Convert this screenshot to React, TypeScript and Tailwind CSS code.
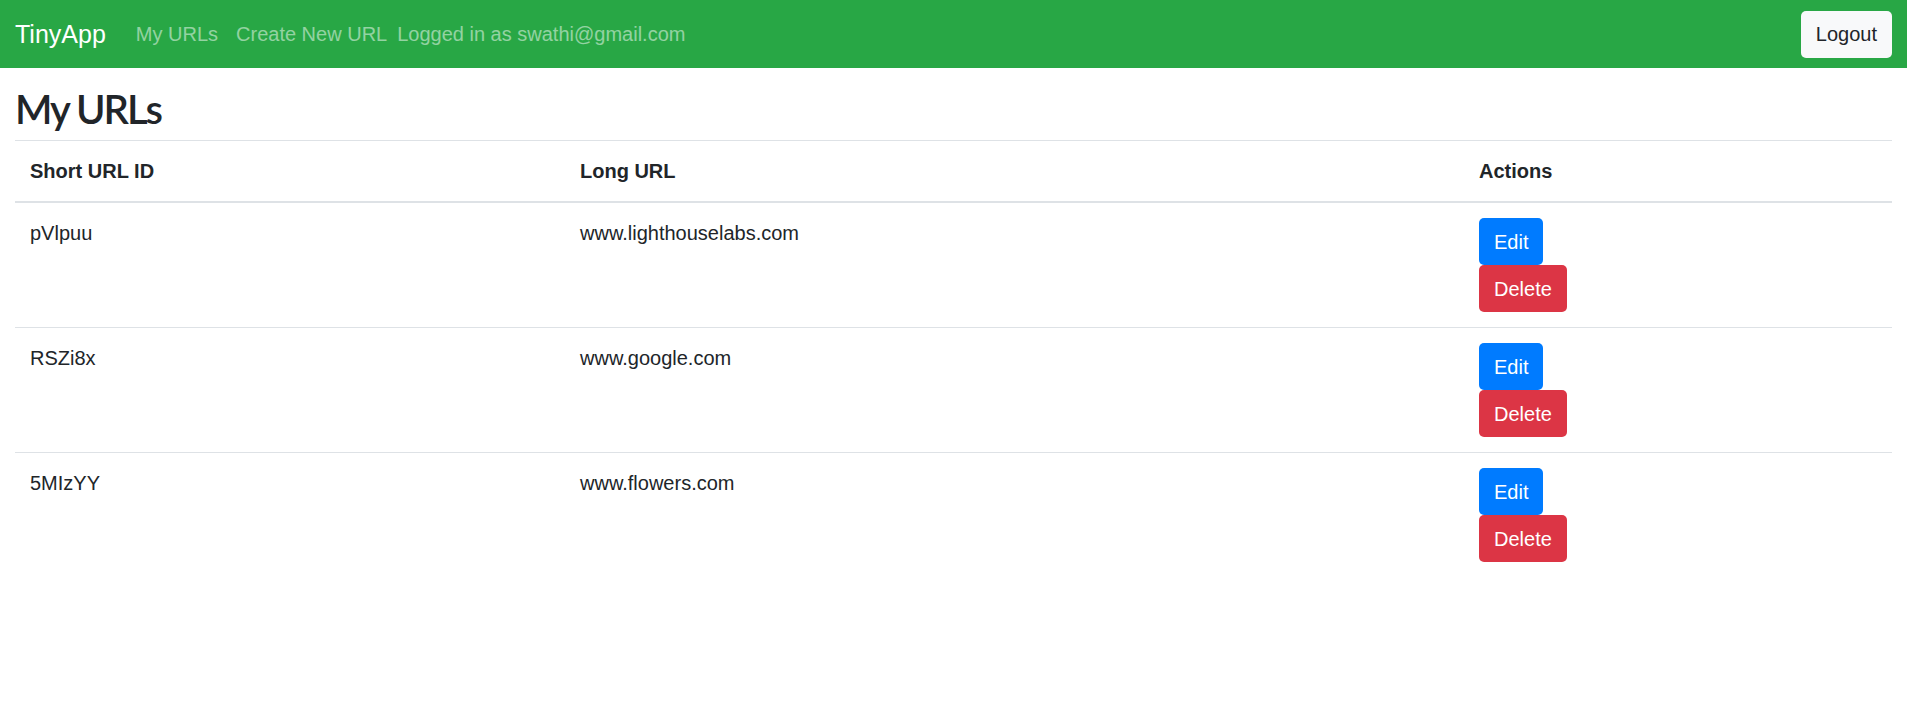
import React from 'react';

const urls = [
  { id: 'pVlpuu', long: 'www.lighthouselabs.com' },
  { id: 'RSZi8x', long: 'www.google.com' },
  { id: '5MIzYY', long: 'www.flowers.com' },
];

export default function App() {
  return (
    <div className="min-h-screen bg-white text-[20px] leading-[30px] text-[#212529]" style={{ fontFamily: '"Liberation Sans", Arial, sans-serif' }}>
      {/* Navbar */}
      <nav className="flex h-[68px] items-center justify-between bg-[#28a745] px-[15px]">
        <div className="flex items-center">
          <a href="#" className="mr-[20px] text-[25px] leading-[38px] text-white">TinyApp</a>
          <a href="#" className="px-[10px] text-white/50">My URLs</a>
          <a href="#" className="pl-[8px] pr-[10px] text-white/50">Create New URL</a>
          <span className="text-white/50">Logged in as swathi@gmail.com</span>
        </div>
        <button className="h-[47px] rounded-[5px] bg-[#f8f9fa] px-[15px] text-[#212529]">Logout</button>
      </nav>

      <main className="px-[15px]">
        <h2 className="mt-[17px] mb-[7px] font-['Lato',sans-serif] text-[40px] font-semibold leading-[48px] tracking-[-2px]">My URLs</h2>
        <table className="w-full border-collapse">
          <thead>
            <tr className="border-t border-b-[2.5px] border-t-[#dee2e6] border-b-[#dee2e6]">
              <th className="w-[550px] p-[15px] text-left font-bold">Short URL ID</th>
              <th className="w-[899px] p-[15px] text-left font-bold">Long URL</th>
              <th className="p-[15px] text-left font-bold">Actions</th>
            </tr>
          </thead>
          <tbody>
            {urls.map((u, i) => (
              <tr key={u.id} className={i > 0 ? 'border-t border-[#dee2e6]' : ''}>
                <td className="p-[15px] align-top">{u.id}</td>
                <td className="p-[15px] align-top">{u.long}</td>
                <td className="p-[15px] align-top">
                  <button className="block h-[47px] rounded-[5px] bg-[#007bff] px-[15px] text-white">Edit</button>
                  <button className="block h-[47px] rounded-[5px] bg-[#dc3545] px-[15px] text-white">Delete</button>
                </td>
              </tr>
            ))}
          </tbody>
        </table>
      </main>
    </div>
  );
}
